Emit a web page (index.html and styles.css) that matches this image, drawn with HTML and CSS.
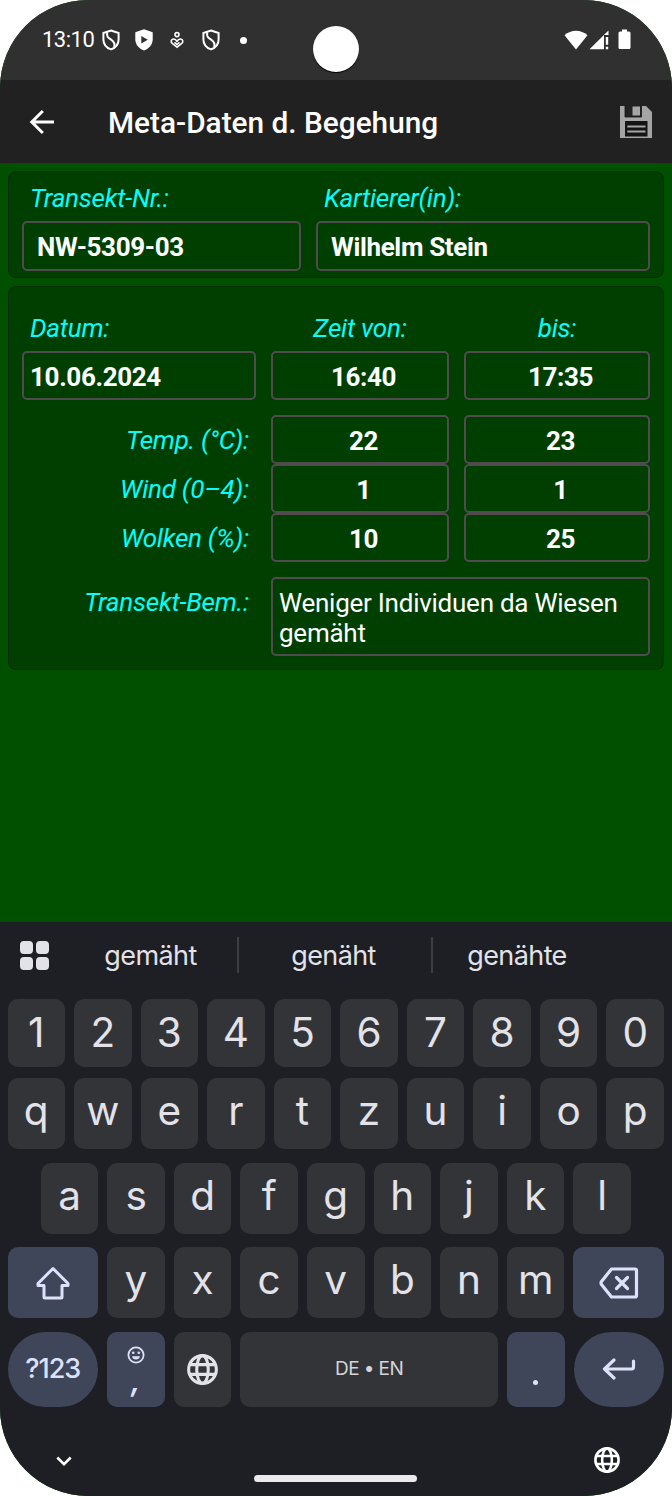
FILE: index.html
```html
<!DOCTYPE html>
<html lang="de">
<head>
<meta charset="utf-8">
<title>Meta-Daten d. Begehung</title>
<link rel="stylesheet" href="styles.css">
</head>
<body>
<svg class="defs" width="0" height="0">
  <symbol id="shield" viewBox="0 0 18 22">
    <path d="M9 1.500 16.600 4v6.400c0 4.600-3.200 8.300-7.600 10-4.400-1.700-7.600-5.400-7.600-10V4z" fill="none" stroke="#fff" stroke-width="2"/>
    <path d="M5.200 3.500c-.6 3.800.6 5 3.600 6.900 3.400 2.200 4.500 4.400 3.400 8.100" fill="none" stroke="#fff" stroke-width="2"/>
  </symbol>
  <symbol id="globe" viewBox="0 0 30 30">
    <g fill="none" stroke="currentColor" stroke-width="3">
      <circle cx="15" cy="15" r="13.400"/>
      <ellipse cx="15" cy="15" rx="5.600" ry="13.400"/>
      <path d="M2.500 10.300h25M2.500 19.700h25"/>
    </g>
  </symbol>
</svg>
<div class="phone">
  <header class="status">
    <span class="clock">13:10</span>
    <svg class="ic-shield" width="18" height="22"><use href="#shield"/></svg>
    <svg class="ic-play" width="18" height="22" viewBox="0 0 18 22"><path d="M9 .3 17.700 3.300v7.200c0 5-3.700 9.200-8.700 11C4 19.700.3 15.500.3 10.500V3.300z" fill="#fff"/><path d="M6.300 7v7.400l6.500-3.700z" fill="#303030"/></svg>
    <svg class="ic-care" width="14" height="18" viewBox="0 0 14 18"><g fill="none" stroke="#fff" stroke-width="1.600"><circle cx="7" cy="3.600" r="2"/><path d="M7 16.200 2.300 12.500C.6 11 .9 8.800 2.700 8.200 4.400 7.600 6 8.700 7 10.300c1-1.600 2.600-2.700 4.300-2.100 1.800.6 2.100 2.800.4 4.300z"/><path d="M4.500 11.300 7 13.500l2.500-2.200"/></g></svg>
    <svg class="ic-shield2" width="18" height="22"><use href="#shield"/></svg>
    <span class="dot"></span>
    <span class="camera"></span>
    <svg class="ic-wifi" width="24" height="20" viewBox="0 0 24 20"><path d="M.5 5.200C7-.9 17-.9 23.500 5.200L12 19.500z" fill="#fff"/></svg>
    <svg class="ic-signal" width="20" height="20" viewBox="0 0 20 20"><path d="M.5 19.300 19.500.5V5h-4.500v14.300z" fill="#fff"/><path d="M16.800 7h2.400v7.800h-2.400zM16.800 16.700h2.400v2.500h-2.400z" fill="#fff"/></svg>
    <svg class="ic-battery" width="13" height="21" viewBox="0 0 13 21"><path d="M4 .5h5v2h2q1.500 0 1.500 1.500v14.500q0 1.500-1.500 1.500H2Q.5 20 .5 18.500V4q0-1.500 1.500-1.500h2z" fill="#fff"/></svg>
  </header>

  <nav class="appbar">
    <svg class="back" width="26" height="26" viewBox="0 0 26 26"><path d="M25 13H3.500M13.800 2 2.800 13l11 11" fill="none" stroke="#fff" stroke-width="3"/></svg>
    <h1>Meta-Daten d. Begehung</h1>
    <svg class="save" width="36" height="36" viewBox="0 0 36 36">
      <path d="M1.500 1.500H7V13h16.500V1.500H28l6.500 6.500v26.500h-33z" fill="#a5a5a5" stroke="#111" stroke-width=".8"/>
      <path d="M14.500 2.500h7.500v9h-7.500z" fill="#a5a5a5"/>
      <path d="M7 17h22.500v15.500H7z" fill="#141414"/>
      <path d="M9.300 22.500h18.200M9.300 27.500h18.200" stroke="#a5a5a5" stroke-width="2.200"/>
    </svg>
  </nav>

  <main class="content">
    <section class="card head-card">
      <label>Transekt-Nr.:</label><label class="second">Kartierer(in):</label>
      <div class="field wide">NW-5309-03</div><div class="field wide">Wilhelm Stein</div>
    </section>
    <section class="card data-card">
      <label class="start">Datum:</label><label class="mid">Zeit von:</label><label class="mid">bis:</label>
      <div class="field">10.06.2024</div><div class="field num">16:40</div><div class="field num">17:35</div>
      <div class="gap"></div>
      <label class="end">Temp. (°C):</label><div class="field num">22</div><div class="field num">23</div>
      <label class="end">Wind (0–4):</label><div class="field num">1</div><div class="field num">1</div>
      <label class="end">Wolken (%):</label><div class="field num">10</div><div class="field num">25</div>
      <div class="gap"></div>
      <label class="end">Transekt-Bem.:</label><div class="field note">Weniger Individuen da Wiesen gemäht</div>
    </section>
  </main>

  <section class="keyboard">
    <div class="suggest">
      <div class="apps"><i></i><i></i><i></i><i></i></div>
      <span class="word">gemäht</span><i class="sep"></i>
      <span class="word">genäht</span><i class="sep"></i>
      <span class="word last">genähte</span>
    </div>
    <div class="keys digits"><b>1</b><b>2</b><b>3</b><b>4</b><b>5</b><b>6</b><b>7</b><b>8</b><b>9</b><b>0</b></div>
    <div class="keys"><b>q</b><b>w</b><b>e</b><b>r</b><b>t</b><b>z</b><b>u</b><b>i</b><b>o</b><b>p</b></div>
    <div class="keys inset"><b>a</b><b>s</b><b>d</b><b>f</b><b>g</b><b>h</b><b>j</b><b>k</b><b>l</b></div>
    <div class="keys">
      <b class="big blue"><svg width="36" height="34" viewBox="0 0 36 34"><path d="M18 2.500 33 17.500V19.500H27V31q0 1-1 1H10q-1 0-1-1V19.500H3V17.500z" fill="none" stroke="#dde1fb" stroke-width="3" stroke-linejoin="round"/></svg></b>
      <b>y</b><b>x</b><b>c</b><b>v</b><b>b</b><b>n</b><b>m</b>
      <b class="big blue"><svg width="40" height="32" viewBox="0 0 40 32"><g fill="none" stroke="#dde1fb" stroke-width="3.200" stroke-linejoin="round" stroke-linecap="round"><path d="M12.500 2H36q1.500 0 1.500 1.500v25q0 1.500-1.500 1.500H12.500L2.500 17.500q-1-1.500 0-3z"/><path d="M17.500 10.500l11 11M28.500 10.500l-11 11"/></g></svg></b>
    </div>
    <div class="keys bottom">
      <b class="big blue round sym">?123</b>
      <b class="blue comma"><svg width="18" height="18" viewBox="0 0 18 18"><circle cx="9" cy="9" r="7.600" fill="none" stroke="#dde1fb" stroke-width="1.800"/><circle cx="6.200" cy="6.800" r="1.300" fill="#dde1fb"/><circle cx="11.800" cy="6.800" r="1.300" fill="#dde1fb"/><path d="M5 10.300h8q-.8 3.200-4 3.200t-4-3.200z" fill="#dde1fb"/></svg><span>,</span></b>
      <b><svg class="globe" width="31" height="31"><use href="#globe"/></svg></b>
      <b class="space">DE • EN</b>
      <b class="blue period"><i></i></b>
      <b class="big blue round"><svg width="34" height="22" viewBox="0 0 34 22"><path d="M12 2 2.500 11 12 20M2.500 11H29.500q2 0 2-2V3" fill="none" stroke="#dde1fb" stroke-width="3.200" stroke-linecap="round" stroke-linejoin="round"/></svg></b>
    </div>
    <div class="navbar">
      <svg class="chev" width="16" height="11" viewBox="0 0 16 11"><path d="M1.300 1.500 8 8.200l6.700-6.700" fill="none" stroke="#fff" stroke-width="2.500"/></svg>
      <span class="handle"></span>
      <svg class="globe2" width="26" height="26"><use href="#globe"/></svg>
    </div>
  </section>
</div>
</body>
</html>
```

FILE: styles.css
```css
* { box-sizing: border-box; }
body { margin: 0; background: #fff; font-family: Roboto, "Liberation Sans", sans-serif; }
svg { display: block; flex: none; }
.defs { position: absolute; }
.phone { width: 672px; height: 1496px; border-radius: 88px; overflow: hidden; background: #005000; display: flex; flex-direction: column; }

.status { position: relative; height: 80px; flex: none; background: #303030; display: flex; align-items: center; padding-left: 42px; }
.clock { color: #fff; font-size: 22px; line-height: 24px; width: 60px; letter-spacing: -.5px; }
.ic-play { margin-left: 15px; }
.ic-care { margin-left: 17px; }
.ic-shield2 { margin-left: 18px; }
.dot { width: 7px; height: 7px; border-radius: 50%; background: #fff; margin-left: 20px; }
.camera { position: absolute; left: 313px; top: 26px; width: 46px; height: 46px; border-radius: 50%; background: #fff; box-shadow: 0 1px 1px #000; }
.ic-wifi { margin-left: auto; margin-bottom: 1px; }
.ic-signal { margin-left: 1px; margin-right: 9px; margin-bottom: 1px; }
.ic-battery { margin-right: 41px; margin-bottom: 2px; }

.appbar { height: 83px; flex: none; background: #212121; display: flex; align-items: center; padding: 0 18px 0 29px; }
.appbar h1 { margin: 3px 0 0 53px; color: #fff; font-size: 29.800px; font-weight: 500; line-height: 36px; white-space: nowrap; }
.save { margin-left: auto; margin-top: 1px; }

.content { flex: 1; padding: 8px; display: flex; flex-direction: column; gap: 8px; }
.card { background: #003f00; border: 1px solid #002c00; border-radius: 8px; display: grid; column-gap: 15px; align-content: start; padding: 0 14px 0 13px; }
.head-card { height: 107px; grid-template-columns: 279px 334px; grid-template-rows: 49px 50px; }
.data-card { height: 384px; grid-template-columns: 234px 178px 186px; grid-template-rows: 64px 49px 15px 49px 49px 49px 15px 79px; }
.gap { grid-column: 1 / -1; }
label { color: #0ff; font-style: italic; font-size: 26px; line-height: 30px; letter-spacing: -.250px; padding-left: 8px; white-space: nowrap; }
.head-card label { padding-top: 11px; }
.data-card .start, .data-card .mid { padding-top: 26px; }
.data-card .mid { text-align: center; padding-left: 0; }
.data-card .end { text-align: right; padding: 10px 7px 0 0; }
.field { border: 2px solid #514b4f; border-radius: 5px; color: #fff; font-weight: 700; font-size: 26px; line-height: 30px; letter-spacing: -.350px; padding: 9px 6px 0; white-space: nowrap; }
.wide { padding-left: 13px; }
.num { text-align: center; padding: 9px 0 0 7px; }
.note { grid-column: 2 / 4; font-weight: 400; white-space: normal; line-height: 29.500px; letter-spacing: -.250px; padding-top: 10px; }

.keyboard { height: 574px; flex: none; background: #1e1f24; color: #e2e2e8; font-family: Inter, Lato, sans-serif; }
.suggest { height: 77px; display: flex; align-items: center; padding: 0 42px 11px 20px; }
.apps { width: 29px; display: grid; grid-template-columns: 13px 13px; gap: 3px; }
.apps i { height: 13px; background: #e2e2e8; border-radius: 4px; }
.word { width: 192px; padding-right: 3px; text-align: center; font-size: 27px; letter-spacing: -.600px; }
.apps + .word { width: 188px; padding: 0 0 0 15px; }
.word.last { width: 171px; }
.sep { width: 2px; height: 36px; background: #3d3e43; }
.keys { display: flex; gap: 9px; height: 71px; margin: 0 8px 13.500px 7.500px; }
.digits { height: 67.500px; margin-bottom: 11.500px; }
.inset { padding: 0 33.250px; }
.keys b { flex: 1 1 0; display: flex; align-items: center; justify-content: center; background: #333438; border-radius: 10px; font-weight: 400; font-size: 40.500px; line-height: 48px; padding-bottom: 5px; }
.digits b { padding-bottom: 0; }
.keys .big { flex: 0 0 90.500px; padding-bottom: 0; }
.keys .blue { background: #40465a; color: #dde1fb; }
.bottom { height: 75px; }
.keys b.round { border-radius: 37.500px; padding: 0; }
.keys b.sym { font-size: 27px; font-weight: 500; letter-spacing: -1px; }
.keys b.comma { flex-direction: column; justify-content: flex-start; padding-top: 14px; }
.comma span { font-size: 30px; line-height: 30px; margin-top: 1px; font-style: italic; font-weight: 600; }
.bottom b:nth-child(3) { padding: 0; }
.keys b.space { flex: 0 0 257.500px; font-size: 19px; color: #d4d4da; letter-spacing: -.600px; padding: 0; }
.keys b.period { padding: 26px 0 0; }
.period i { width: 5px; height: 5px; border-radius: 50%; background: #dde1fb; }
.navbar { height: 76px; display: flex; align-items: flex-start; color: #fff; }
.chev { margin: 36px 0 0 56px; }
.handle { width: 163px; height: 7px; border-radius: 4px; background: #ece8ec; margin: 55px 177px 0 182px; }
.globe2 { margin-top: 27px; }
```
